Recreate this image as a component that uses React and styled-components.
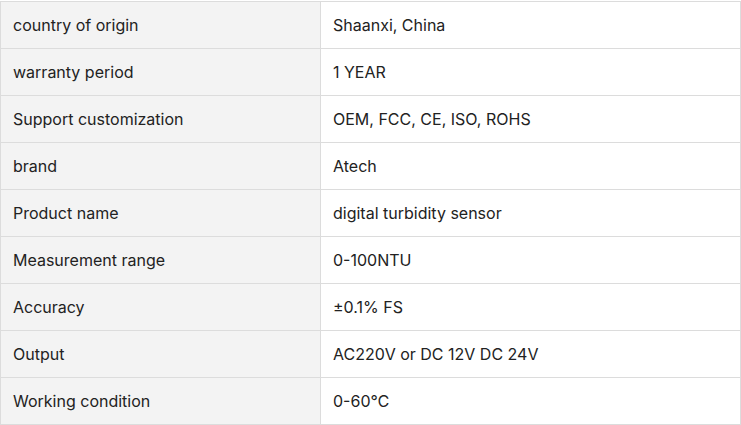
import React from "react";
import styled, { createGlobalStyle } from "styled-components";

const Global = createGlobalStyle`
  html, body { margin: 0; padding: 0; background: #fff; }
  body { font-family: Inter, "Noto Sans", Arial, sans-serif; }
`;

const Wrap = styled.div`
  padding-top: 1px;
`;

const Table = styled.table`
  width: 741px;
  border-collapse: collapse;
  table-layout: fixed;
  font-family: Inter, "Noto Sans", sans-serif;
  font-size: 16px;
  color: #222;
`;

const Row = styled.tr`
  height: 47px;
`;

const Cell = styled.td`
  border: 1px solid #dcdcdc;
  padding: 0 12px;
  vertical-align: middle;
  background: ${(p) => (p.$label ? "#f3f3f3" : "#fff")};
  box-sizing: border-box;
`;

const rows = [
  ["country of origin", "Shaanxi, China"],
  ["warranty period", "1 YEAR"],
  ["Support customization", "OEM, FCC, CE, ISO, ROHS"],
  ["brand", "Atech"],
  ["Product name", "digital turbidity sensor"],
  ["Measurement range", "0-100NTU"],
  ["Accuracy", "±0.1% FS"],
  ["Output", "AC220V or DC 12V DC 24V"],
  ["Working condition", "0-60℃"],
];

export default function App() {
  return (
    <>
      <Global />
      <Wrap>
        <Table>
          <colgroup>
            <col style={{ width: 320 }} />
            <col />
          </colgroup>
          <tbody>
            {rows.map(([k, v]) => (
              <Row key={k}>
                <Cell $label>{k}</Cell>
                <Cell>{v}</Cell>
              </Row>
            ))}
          </tbody>
        </Table>
      </Wrap>
    </>
  );
}
